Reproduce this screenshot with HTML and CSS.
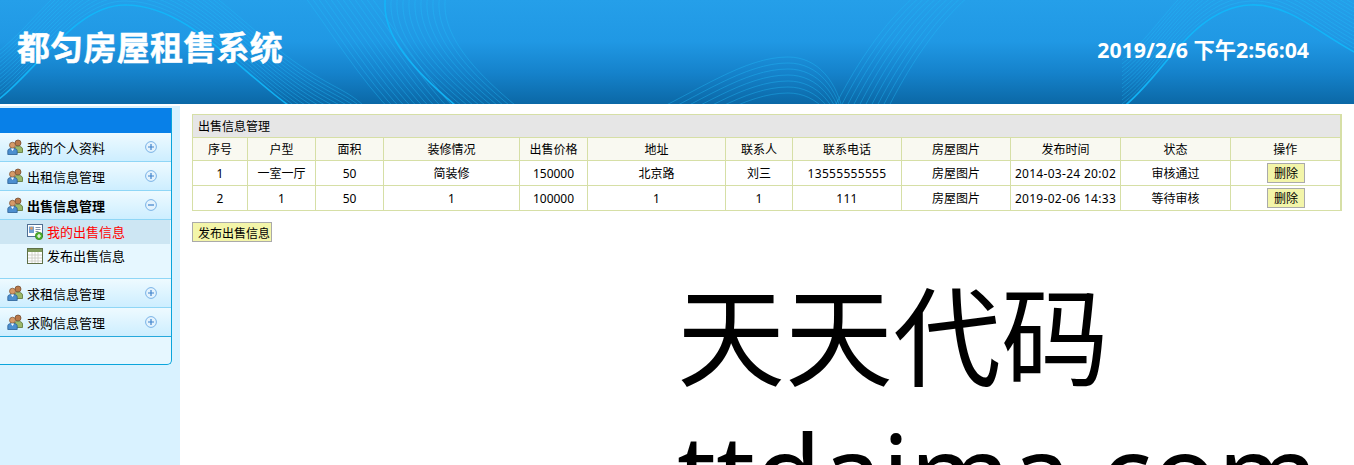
FILE: index.html
```html
<!DOCTYPE html>
<html lang="zh-CN">
<head>
<meta charset="utf-8">
<title>都匀房屋租售系统</title>
<link rel="stylesheet" href="styles.css">
</head>
<body>
<svg width="0" height="0" class="defs">
  <defs>
    <symbol id="users" viewBox="0 0 16 16">
      <circle cx="11" cy="4" r="3" fill="#b9794a" stroke="#6b4426" stroke-width=".7"/>
      <path d="M7.500 13.500V10c0-1.800 1.500-2.800 3.500-2.800s4.500 1 4.500 2.800v3.500z" fill="#9bb86a" stroke="#5a7332" stroke-width=".8"/>
      <circle cx="5.500" cy="6.200" r="3" fill="#d69a68" stroke="#7b5030" stroke-width=".7"/>
      <path d="M.8 15.500v-3.700C.8 10 2.800 9.400 5.500 9.400s4.700.6 4.700 2.400v3.700z" fill="#4c8fd0" stroke="#2a5f96" stroke-width=".8"/>
      <path d="M3.800 9.500h3.400L5.500 12z" fill="#fff"/>
    </symbol>
    <symbol id="plus" viewBox="0 0 12 12">
      <circle cx="6" cy="6" r="5.400" fill="#e4f3fd" stroke="#79b2e6"/>
      <path d="M3 6h6M6 3v6" stroke="#3f83cc" stroke-width="1.200"/>
    </symbol>
    <symbol id="minus" viewBox="0 0 12 12">
      <circle cx="6" cy="6" r="5.400" fill="#e4f3fd" stroke="#79b2e6"/>
      <path d="M3 6h6" stroke="#3f83cc" stroke-width="1.200"/>
    </symbol>
    <path id="wa" d="M-20 112C30 85 70 5 125 5c55 0 100 50 150 90s70 40 90 60"/>
    <path id="wb" d="M300-10c30 40 60 90 95 125"/>
    <path id="wc" d="M386-6c-8 40 30 80 80 120"/>
    <path id="wd" d="M640 118C700 90 745 57 788 57c30 0 50 25 56 60"/>
    <path id="we" d="M832 112c20-40 50-90 90-122"/>
    <path id="wf" d="M1122 108c40-30 70-100 128-103 40-2 70 30 110 50"/>
    <clipPath id="cf"><rect x="1122" y="0" width="232" height="104"/></clipPath>
  </defs>
</svg>

<header class="top">
  <svg class="waves" viewBox="0 0 1354 104" aria-hidden="true">
    <g class="fine">
      <use href="#wa" y="-4"/><use href="#wa" y="-8"/><use href="#wa" y="-12"/><use href="#wa" y="-16"/><use href="#wa" y="-20"/><use href="#wa" y="-24"/><use href="#wa" y="-28"/><use href="#wa" y="-32"/><use href="#wa" y="-36"/><use href="#wa" y="-40"/><use href="#wa" y="-44"/><use href="#wa" y="-48"/>
      <use href="#wb"/><use href="#wb" x="6"/><use href="#wb" x="12"/><use href="#wb" x="18"/><use href="#wb" x="24"/><use href="#wb" x="30"/><use href="#wb" x="36"/><use href="#wb" x="42"/><use href="#wb" x="48"/><use href="#wb" x="54"/><use href="#wb" x="60"/><use href="#wb" x="66"/>
      <use href="#wc" x="6"/><use href="#wc" x="12"/><use href="#wc" x="18"/><use href="#wc" x="24"/><use href="#wc" x="30"/><use href="#wc" x="36"/><use href="#wc" x="42"/><use href="#wc" x="48"/><use href="#wc" x="54"/><use href="#wc" x="60"/>
      <use href="#wd"/><use href="#wd" y="6"/><use href="#wd" y="12"/><use href="#wd" y="18"/><use href="#wd" y="24"/><use href="#wd" y="30"/><use href="#wd" y="36"/>
      <use href="#we"/><use href="#we" x="6"/><use href="#we" x="12"/><use href="#we" x="18"/><use href="#we" x="24"/><use href="#we" x="30"/><use href="#we" x="36"/><use href="#we" x="42"/><use href="#we" x="48"/><use href="#we" x="54"/>
      <g clip-path="url(#cf)">
        <use href="#wf" y="-4"/><use href="#wf" y="-8"/><use href="#wf" y="-12"/><use href="#wf" y="-16"/><use href="#wf" y="-20"/><use href="#wf" y="-24"/><use href="#wf" y="-28"/><use href="#wf" y="-32"/><use href="#wf" y="-36"/><use href="#wf" y="-40"/><use href="#wf" y="-44"/><use href="#wf" y="-48"/>
      </g>
    </g>
    <use href="#wa" class="bright"/>
    <use href="#wc" class="bright"/>
    <use href="#wf" class="bright"/>
  </svg>
  <h1 class="brand">都匀房屋租售系统</h1>
  <div class="clock">2019/2/6 下午2:56:04</div>
</header>

<div class="page">
  <aside class="side">
    <div class="menu">
      <div class="menu-head"></div>
      <div class="group"><svg class="ic-user"><use href="#users"/></svg><span class="group-name">我的个人资料</span><svg class="ic-toggle"><use href="#plus"/></svg></div>
      <div class="group"><svg class="ic-user"><use href="#users"/></svg><span class="group-name">出租信息管理</span><svg class="ic-toggle"><use href="#plus"/></svg></div>
      <div class="group"><svg class="ic-user"><use href="#users"/></svg><span class="group-name strong">出售信息管理</span><svg class="ic-toggle"><use href="#minus"/></svg></div>
      <div class="subs">
        <div class="sub active">
          <svg class="ic-sub" viewBox="0 0 16 16"><rect x=".5" y=".5" width="15" height="12" fill="#fff" stroke="#4f6f93"/><rect x="2" y="2.500" width="5" height="6.500" fill="#6f9fd0"/><circle cx="4.500" cy="4.300" r="1.500" fill="#d69a68"/><path d="M8.500 3.500h5M8.500 5.500h5M8.500 7.500h3" stroke="#7f93aa"/><circle cx="12" cy="12" r="3.700" fill="#4eb02e" stroke="#2f7d17" stroke-width=".6"/><path d="M10 12h4M12 10v4" stroke="#fff" stroke-width="1.200"/></svg>
          <span class="sub-name">我的出售信息</span>
        </div>
        <div class="sub">
          <svg class="ic-sub" viewBox="0 0 16 16"><rect x=".5" y=".5" width="15" height="15" fill="#fff" stroke="#5f7048"/><rect x="1" y="1" width="14" height="3" fill="#7f9a5c"/><path d="M1 7h14M1 10h14M1 13h14M5 4v11M8 4v11M11 4v11" stroke="#c9c9c0" stroke-width=".8"/></svg>
          <span class="sub-name">发布出售信息</span>
        </div>
      </div>
      <div class="group"><svg class="ic-user"><use href="#users"/></svg><span class="group-name">求租信息管理</span><svg class="ic-toggle"><use href="#plus"/></svg></div>
      <div class="group"><svg class="ic-user"><use href="#users"/></svg><span class="group-name">求购信息管理</span><svg class="ic-toggle"><use href="#plus"/></svg></div>
      <div class="menu-foot"></div>
    </div>
  </aside>

  <main class="content">
    <table class="grid">
      <colgroup>
        <col class="c55"><col class="c68"><col class="c68"><col class="c136"><col class="c68"><col class="c138"><col class="c67"><col class="c109"><col class="c109"><col class="c110"><col class="c110"><col class="c110">
      </colgroup>
      <thead>
        <tr class="title"><th colspan="12">出售信息管理</th></tr>
        <tr class="heads"><th>序号</th><th>户型</th><th>面积</th><th>装修情况</th><th>出售价格</th><th>地址</th><th>联系人</th><th>联系电话</th><th>房屋图片</th><th>发布时间</th><th>状态</th><th>操作</th></tr>
      </thead>
      <tbody>
        <tr><td>1</td><td>一室一厅</td><td>50</td><td>简装修</td><td>150000</td><td>北京路</td><td>刘三</td><td class="num">13555555555</td><td>房屋图片</td><td class="num">2014-03-24 20:02</td><td>审核通过</td><td class="op"><button class="btn del">删除</button></td></tr>
        <tr><td>2</td><td>1</td><td>50</td><td>1</td><td>100000</td><td>1</td><td>1</td><td class="num">111</td><td>房屋图片</td><td class="num">2019-02-06 14:33</td><td>等待审核</td><td class="op"><button class="btn del">删除</button></td></tr>
      </tbody>
    </table>
    <button class="btn publish">发布出售信息</button>
    <div class="mark">天天代码<br>ttdaima.com</div>
  </main>
</div>
</body>
</html>
```
FILE: styles.css
```css
* { box-sizing: border-box; }
html, body { margin: 0; height: 465px; overflow: hidden; background: #fff; }
body { font-family: "Noto Sans", "Noto Sans CJK SC", sans-serif; font-size: 12px; color: #000; }
.defs { position: absolute; }

.top {
  position: relative;
  height: 104px;
  background: linear-gradient(#259fe9 0, #2098e4 40%, #1582cb 70%, #0b68a6 100%);
  display: flex;
  align-items: center;
  justify-content: space-between;
  padding: 0 45px 12px 17px;
  overflow: hidden;
}
.waves { position: absolute; inset: 0; width: 100%; height: 100%; }
.fine { fill: none; stroke: #22bdfb; stroke-opacity: .38; stroke-width: 1; }
.bright { fill: none; stroke: #12b8fa; stroke-opacity: .9; stroke-width: 1.600; }
.brand {
  position: relative;
  margin: 0;
  font-size: 33px;
  letter-spacing: .25px;
  line-height: 44px;
  font-weight: 700;
  color: #fff;
  -webkit-text-stroke: .4px #fff;
  font-family: "Noto Sans CJK SC", sans-serif;
}
.clock { position: relative; font-size: 21.300px; line-height: 28px; font-weight: 700; color: #fff; margin-top: 8px; }

.page { display: flex; height: 361px; }
.side { width: 180px; flex: none; margin-top: 2px; background: #d9f2ff; padding-top: 2px; }
.menu {
  width: 172px;
  border: 1px solid #0ba5dc;
  border-left: 0;
  border-top: 0;
  border-bottom-right-radius: 5px;
  background: #e6f7ff;
}
.menu-head { height: 25px; background: #0880e8; }
.group {
  height: 29px;
  display: flex;
  align-items: center;
  padding: 0 14px 0 7px;
  border-bottom: 1px solid #8fd6f6;
  background: linear-gradient(#eefaff, #cdeeff);
}
.ic-user { width: 16px; height: 16px; flex: none; margin-right: 4px; }
.group-name { flex: 1; font-size: 13px; line-height: 18px; padding-top: 2px; }
.strong { font-weight: 700; }
.ic-toggle { width: 12px; height: 12px; flex: none; }
.subs { height: 59px; background: #e6f7ff; border-bottom: 1px solid #8fd6f6; }
.sub { height: 24px; display: flex; align-items: center; padding-left: 27px; margin-right: 1px; font-size: 13px; }
.sub-name { margin-top: -2px; }
.sub .ic-sub { width: 16px; height: 16px; margin-right: 4px; flex: none; }
.active { background: #cde6f3; color: #f00; }
.menu-foot { height: 28px; border-top: 1px solid #27a9dc; margin-top: -1px; }

.content { flex: 1; min-width: 0; padding: 10px 13px 0 12px; }
.grid {
  width: 1149px;
  table-layout: fixed;
  border-collapse: collapse;
  border: 1px solid #d6dfa6;
  border-right-width: 2px;
}
.grid th, .grid td {
  border: 1px solid #d6dfa6;
  padding: 2px 0 0;
  text-align: center;
  font-weight: 400;
  font-size: 12px;
  line-height: 16px;
}
.c55 { width: 55px; } .c67 { width: 67px; } .c68 { width: 68px; }
.c109 { width: 109px; } .c110 { width: 110px; } .c136 { width: 136px; } .c138 { width: 138px; }
.grid .title th { height: 23px; background: #e6e6e6; text-align: left; padding-left: 5px; }
.heads th { height: 23px; background: #f9f9f1; }
.grid td { height: 25px; }
.grid .op { padding: 0; }
.num { letter-spacing: .3px; }
.btn {
  display: block;
  padding: 2px 0 0;
  margin: 0;
  font: inherit;
  line-height: 16px;
  color: #000;
  background: #f3f5a9;
  border: 1px solid #aaa;
}
.del { width: 38px; height: 20px; margin: 0 auto 0 36px; }
.publish { width: 80px; height: 20px; margin-top: 11px; text-align: left; padding: 3px 0 0 5px; }
.mark {
  margin: 27px 0 0 485px;
  font-size: 108px;
  line-height: 135px;
  white-space: nowrap;
  color: #000;
}
```
